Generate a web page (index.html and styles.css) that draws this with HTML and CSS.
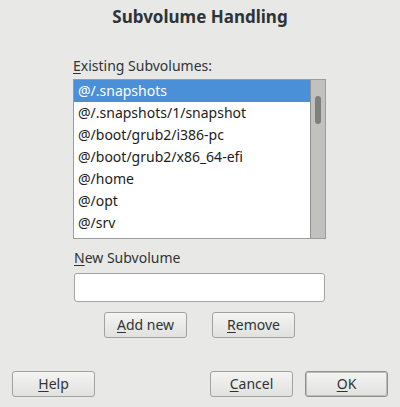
FILE: index.html
```html
<!DOCTYPE html>
<html>
<head>
<meta charset="utf-8">
<link rel="stylesheet" href="styles.css">
</head>
<body>
<div class="dialog">
  <h1 class="title">Subvolume Handling</h1>
  <div class="main">
    <div class="label"><u>E</u>xisting Subvolumes:</div>
    <div class="listbox">
      <ul class="items">
        <li class="item selected">@/.snapshots</li>
        <li class="item">@/.snapshots/1/snapshot</li>
        <li class="item">@/boot/grub2/i386-pc</li>
        <li class="item">@/boot/grub2/x86_64-efi</li>
        <li class="item">@/home</li>
        <li class="item">@/opt</li>
        <li class="item">@/srv</li>
      </ul>
      <div class="scrollbar"><div class="thumb"></div></div>
    </div>
    <div class="label label-new"><u>N</u>ew Subvolume</div>
    <div class="input"></div>
    <div class="actions">
      <div class="btn"><u>A</u>dd new</div>
      <div class="btn"><u>R</u>emove</div>
    </div>
  </div>
  <div class="footer">
    <div class="btn"><u>H</u>elp</div>
    <div class="spacer"></div>
    <div class="btn"><u>C</u>ancel</div>
    <div class="btn btn-default"><u>O</u>K</div>
  </div>
</div>
</body>
</html>
```
FILE: styles.css
```css
html, body {
  margin: 0;
  padding: 0;
  background: #e8e8e7;
}
body {
  font-family: "Noto Sans", "DejaVu Sans", sans-serif;
  color: #2e3436;
  font-size: 14px;
}
.dialog {
  width: 400px;
  height: 407px;
  display: flex;
  flex-direction: column;
}
.title {
  margin: 0;
  padding-top: 6px;
  height: 22px;
  line-height: 22px;
  font-size: 17px;
  font-weight: bold;
  text-align: center;
  color: #2e3436;
}
.main {
  margin-left: 73px;
  width: 253px;
  display: flex;
  flex-direction: column;
}
u {
  text-decoration: underline;
  text-underline-offset: 2px;
}
.label {
  margin-top: 29px;
  height: 18px;
  line-height: 18px;
}
.label-new {
  margin-top: 10px;
  padding-left: 1px;
}
.listbox {
  margin-top: 4px;
  height: 158px;
  border: 1px solid #9c9d9a;
  display: flex;
  background: #ffffff;
}
.items {
  list-style: none;
  margin: 0;
  padding: 0;
  flex: 1;
  overflow: hidden;
  color: #1c1c1c;
  font-size: 14px;
}
.item {
  height: 22px;
  line-height: 22px;
  padding-left: 4px;
  white-space: nowrap;
}
.selected {
  background: #4a90d9;
  color: #ffffff;
}
.scrollbar {
  width: 14px;
  background: #c1c2bf;
  border-left: 1px solid #8f908d;
  display: flex;
  justify-content: center;
  padding-top: 16px;
}
.thumb {
  width: 6px;
  height: 28px;
  border-radius: 3px;
  background: #7e807e;
}
.input {
  margin-top: 6px;
  margin-left: 1px;
  height: 29px;
  width: 251px;
  box-sizing: border-box;
  border: 1px solid #a4a5a2;
  border-radius: 3px;
  background: #ffffff;
}
.actions {
  margin-top: 10px;
  display: flex;
  justify-content: center;
  gap: 25px;
}
.btn {
  width: 83px;
  height: 26px;
  box-sizing: border-box;
  border: 1px solid #a2a3a0;
  border-radius: 3px;
  background: linear-gradient(#f4f4f3, #e1e1df);
  text-align: center;
  line-height: 24px;
  color: #2e3436;
}
.footer {
  margin-top: auto;
  margin-bottom: 10px;
  padding: 0 12px;
  display: flex;
  gap: 12px;
}
.spacer {
  flex: 1;
}
.btn-default {
  border-color: #8f908d;
  box-shadow: inset 0 0 0 1px #bdbebb;
}
```
